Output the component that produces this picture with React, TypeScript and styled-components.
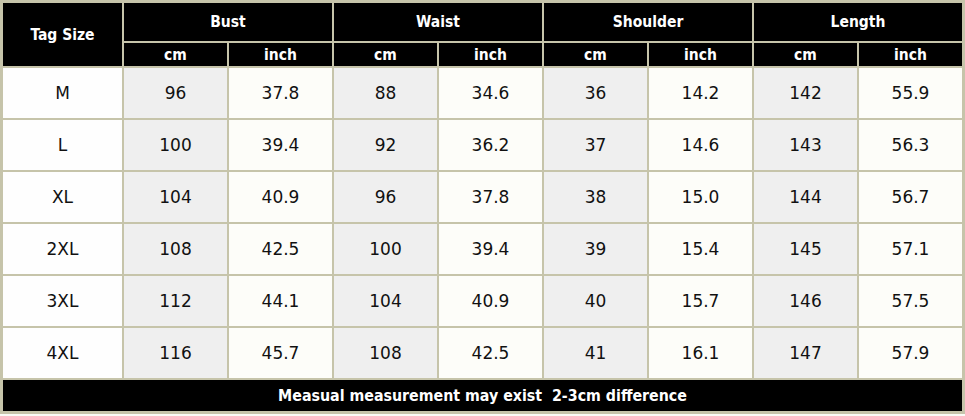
import styled, { createGlobalStyle } from 'styled-components'

const GlobalStyle = createGlobalStyle`
	html, body {
		margin: 0;
		padding: 0;
		background: #fbfbf6;
	}
	body {
		font-family: 'DejaVu Sans', Verdana, sans-serif;
	}
`

const Chart = styled.div`
	display: grid;
	grid-template-columns: 119px repeat(8, 103px);
	grid-template-rows: 38px 23px repeat(6, 50px) 31px;
	gap: 2px;
	padding: 3px;
	width: 965px;
	box-sizing: border-box;
	background: #c6c4aa;
`
const HeadCell = styled.div<{ $span?: number; $rows?: number }>`
	grid-column: span ${({ $span }) => $span || 1};
	grid-row: span ${({ $rows }) => $rows || 1};
	display: flex;
	align-items: center;
	justify-content: center;
	background: #000;
	color: #fff;
	font-family: 'DejaVu Sans Condensed', 'DejaVu Sans', sans-serif;
	font-weight: 700;
	font-size: 15.5px;
`
const Cell = styled.div<{ $tone: 'white' | 'gray' | 'cream' }>`
	display: flex;
	align-items: center;
	justify-content: center;
	background: ${({ $tone }) =>
		$tone === 'gray' ? '#efefef' : $tone === 'cream' ? '#fdfdf9' : '#fefefe'};
	color: #111;
	font-size: 17px;
`
const Footer = styled(HeadCell)`
	grid-column: 1 / -1;
	font-size: 15.8px;
`

const groups = ['Bust', 'Waist', 'Shoulder', 'Length']

const rows = [
	['M', '96', '37.8', '88', '34.6', '36', '14.2', '142', '55.9'],
	['L', '100', '39.4', '92', '36.2', '37', '14.6', '143', '56.3'],
	['XL', '104', '40.9', '96', '37.8', '38', '15.0', '144', '56.7'],
	['2XL', '108', '42.5', '100', '39.4', '39', '15.4', '145', '57.1'],
	['3XL', '112', '44.1', '104', '40.9', '40', '15.7', '146', '57.5'],
	['4XL', '116', '45.7', '108', '42.5', '41', '16.1', '147', '57.9'],
]

const App: React.FC = () => {
	return (
		<>
			<GlobalStyle />
			<Chart>
				<HeadCell $rows={2}>Tag Size</HeadCell>
				{groups.map((g) => (
					<HeadCell key={g} $span={2}>
						{g}
					</HeadCell>
				))}
				{groups.map((g) => [
					<HeadCell key={g + 'cm'}>cm</HeadCell>,
					<HeadCell key={g + 'in'}>inch</HeadCell>,
				])}
				{rows.map((row) =>
					row.map((v, i) => (
						<Cell key={row[0] + i} $tone={i === 0 ? 'white' : i % 2 === 1 ? 'gray' : 'cream'}>
							{v}
						</Cell>
					))
				)}
				<Footer>Measual measurement may exist&nbsp; 2-3cm difference</Footer>
			</Chart>
		</>
	)
}
export default App
